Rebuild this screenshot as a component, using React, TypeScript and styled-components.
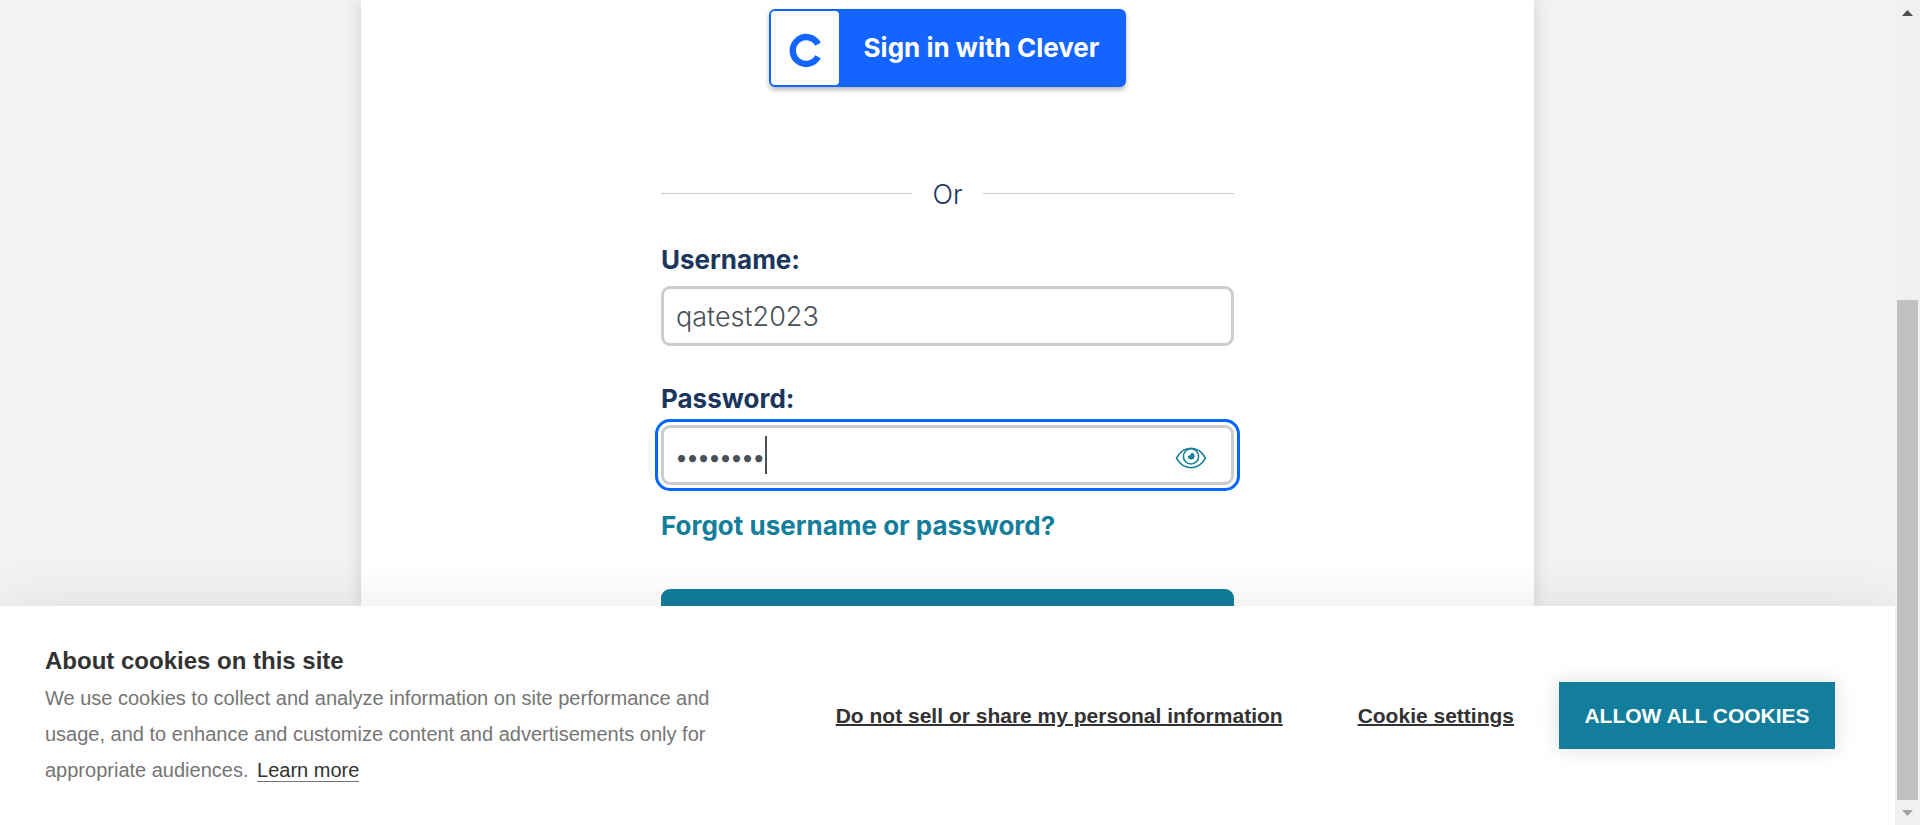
import React, { useState } from 'react';
import styled, { createGlobalStyle } from 'styled-components';

const brandFont = `Inter, 'Open Sans', sans-serif`;
const bannerFont = `'Liberation Sans', Arial, sans-serif`;
const teal = '#127e9b';
const navy = '#1b365d';

const GlobalStyle = createGlobalStyle`
  *, *::before, *::after { box-sizing: border-box; }
  body { margin: 0; background: #f2f2f2; font-family: ${brandFont}; }
`;

const Shell = styled.div`
  display: grid;
  grid-template-columns: minmax(0, 1fr) 25px;
  height: 100vh;
  overflow: hidden;
`;

const Viewport = styled.div`
  display: flex;
  flex-direction: column;
  min-height: 0;
  overflow: hidden;
`;

const Content = styled.main`
  flex: 1;
  min-height: 0;
  overflow: hidden;
  display: flex;
  justify-content: center;
`;

const Card = styled.section`
  display: flex;
  flex-direction: column;
  align-items: center;
  flex: 0 1 1173px;
  min-height: 100%;
  padding: 9px 24px 0;
  background: #fff;
  box-shadow: 0 0 16px rgba(0, 0, 0, 0.14);
`;

const CleverButton = styled.button`
  display: flex;
  flex: none;
  width: 357px;
  max-width: 100%;
  height: 78px;
  padding: 0;
  border: 2px solid #1464ff;
  border-radius: 6px;
  background: #1464ff;
  box-shadow: 0 3px 5px rgba(0, 0, 0, 0.28);
  color: #fff;
  font: 700 26px/36px ${brandFont};
  cursor: pointer;
`;

const CleverMark = styled.span`
  display: flex;
  align-items: center;
  justify-content: center;
  width: 68px;
  height: 74px;
  border-radius: 4px;
  background: #fff;
`;

const CleverText = styled.span`
  flex: 1;
  align-self: center;
  text-align: center;
`;

const Form = styled.form`
  display: flex;
  flex-direction: column;
  width: 573px;
  max-width: 100%;
  margin-top: 90px;
`;

const Divider = styled.div`
  display: flex;
  align-items: center;
  gap: 20px;
  margin-bottom: 29px;
  color: ${navy};
  font-size: 27px;
  font-weight: 300;
  line-height: 36px;

  &::before,
  &::after {
    content: '';
    flex: 1;
    height: 1px;
    margin-bottom: 4px;
    background: #ccc;
  }
`;

const Field = styled.div`
  display: flex;
  flex-direction: column;
  gap: 8px;
  margin-bottom: 35px;

  &:last-of-type { margin-bottom: 23px; }
`;

const Label = styled.label`
  color: ${navy};
  font-size: 26px;
  font-weight: 700;
  line-height: 36px;
`;

const InputFrame = styled.div<{ $focused?: boolean }>`
  position: relative;
  display: flex;
  align-items: center;
  height: 60px;
  padding: 0 24px 0 12px;
  border: 3px solid #ccc;
  border-radius: 9px;
  background: #fff;
  outline: ${(p) => (p.$focused ? '3px solid #0066ff' : 'none')};
  outline-offset: 3px;
`;

const TextInput = styled.input`
  flex: 1;
  min-width: 0;
  height: 100%;
  padding: 0;
  border: 0;
  outline: 0;
  background: transparent;
  color: #495057;
  font: 300 27px/36px ${brandFont};

  &[type='password'] {
    padding-top: 4px;
    font: 400 19px/36px Lato, sans-serif;
  }
`;

const Caret = styled.span`
  position: absolute;
  left: 101px;
  top: 8px;
  width: 2px;
  height: 38px;
  background: #495057;
`;

const EyeButton = styled.button`
  display: flex;
  padding: 0;
  border: 0;
  background: none;
  color: ${teal};
  cursor: pointer;
`;

const ForgotLink = styled.a`
  align-self: flex-start;
  color: ${teal};
  font-size: 26px;
  font-weight: 700;
  line-height: 36px;
  text-decoration: none;
`;

const SubmitButton = styled.button`
  height: 66px;
  margin-top: 45px;
  border: 0;
  border-radius: 9px;
  background: ${teal};
`;

const Banner = styled.aside`
  position: relative;
  display: flex;
  align-items: center;
  justify-content: space-between;
  gap: 24px;
  padding: 36px 60px 37px 45px;
  background: #fff;
  box-shadow: 0 0 50px rgba(0, 0, 0, 0.09);
  font-family: ${bannerFont};
`;

const Notice = styled.div`
  flex: 0 1 672px;
`;

const NoticeTitle = styled.h2`
  margin: 0;
  color: #323232;
  font-size: 24px;
  line-height: 38px;
`;

const NoticeText = styled.p`
  margin: 0;
  color: #757575;
  font-size: 20px;
  line-height: 36px;
`;

const LearnMore = styled.a`
  margin-left: 3px;
  border-bottom: 1px solid #757575;
  color: #323232;
  text-decoration: none;
`;

const Actions = styled.div`
  display: flex;
  align-items: center;
`;

const TextButton = styled.button<{ $gap: number }>`
  margin: 0 ${(p) => p.$gap}px 0 0;
  padding: 2px 0 0;
  border: 0;
  background: none;
  color: #323232;
  font: 700 21px/30px ${bannerFont};
  text-decoration: underline 2px;
  white-space: nowrap;
  cursor: pointer;
`;

const AllowButton = styled.button`
  width: 276px;
  height: 67px;
  padding: 2px 0 0;
  border: 0;
  background: ${teal};
  box-shadow: 0 0 20px rgba(0, 0, 0, 0.14);
  color: #fff;
  font: 700 21px/30px ${bannerFont};
  white-space: nowrap;
  cursor: pointer;
`;

const ScrollTrack = styled.div`
  display: grid;
  grid-template-rows: 25px 1fr 25px;
  justify-items: center;
  background: #f0f0f0;
`;

const ScrollArrow = styled.svg`
  align-self: center;
`;

const ScrollRail = styled.div`
  display: flex;
  flex-direction: column;
  justify-content: flex-end;
  width: 21px;
`;

const ScrollThumb = styled.div`
  height: 64.5%;
  background: #c1c1c1;
`;

export default function App() {
  const [username, setUsername] = useState('qatest2023');
  const [password, setPassword] = useState('password');
  const [visible, setVisible] = useState(false);

  return (
    <>
      <GlobalStyle />
      <Shell>
        <Viewport>
          <Content>
            <Card>
              <CleverButton type="button">
                <CleverMark>
                  <svg width="36" height="40" viewBox="0 0 36 40" fill="none" aria-hidden="true">
                    <path d="M31 16.2A13.4 13.4 0 1 0 31 28.8" stroke="#1464ff" strokeWidth="6.4" />
                  </svg>
                </CleverMark>
                <CleverText>Sign in with Clever</CleverText>
              </CleverButton>
              <Form onSubmit={(e) => e.preventDefault()}>
                <Divider>Or</Divider>
                <Field>
                  <Label htmlFor="username">Username:</Label>
                  <InputFrame>
                    <TextInput id="username" value={username} onChange={(e) => setUsername(e.target.value)} />
                  </InputFrame>
                </Field>
                <Field>
                  <Label htmlFor="password">Password:</Label>
                  <InputFrame $focused>
                    <TextInput
                      id="password"
                      type={visible ? 'text' : 'password'}
                      value={password}
                      onChange={(e) => setPassword(e.target.value)}
                    />
                    <Caret />
                    <EyeButton type="button" aria-label="Show password" onClick={() => setVisible(!visible)}>
                      <svg width="32" height="28" viewBox="0 -6 32 28" fill="none" stroke="currentColor" aria-hidden="true">
                        <path d="M1.4 11.2C5 4.8 10 1.3 16 1.3s11 3.5 14.6 9.9C27 17.4 22 20.7 16 20.7S5 17.4 1.4 11.2z" strokeWidth="1.6" strokeLinejoin="round" />
                        <circle cx="16" cy="9.4" r="7.6" strokeWidth="1.6" />
                        <path d="M16.3 5.8c-.2 1.8-1.2 2.9-3.5 3.2a3.4 3.4 0 1 0 3.5-3.2z" fill="currentColor" stroke="none" />
                      </svg>
                    </EyeButton>
                  </InputFrame>
                </Field>
                <ForgotLink href="#forgot">Forgot username or password?</ForgotLink>
                <SubmitButton type="submit" aria-label="Sign in" />
              </Form>
            </Card>
          </Content>
          <Banner aria-label="Cookies">
            <Notice>
              <NoticeTitle>About cookies on this site</NoticeTitle>
              <NoticeText>
                We use cookies to collect and analyze information on site performance and usage, and to enhance
                and customize content and advertisements only for appropriate audiences.{' '}
                <LearnMore href="#cookies">Learn more</LearnMore>
              </NoticeText>
            </Notice>
            <Actions>
              <TextButton type="button" $gap={75}>Do not sell or share my personal information</TextButton>
              <TextButton type="button" $gap={45}>Cookie settings</TextButton>
              <AllowButton type="button">ALLOW ALL COOKIES</AllowButton>
            </Actions>
          </Banner>
        </Viewport>
        <ScrollTrack aria-hidden="true">
          <ScrollArrow width="11" height="6" viewBox="0 0 11 6"><path d="M0 6 5.5 0 11 6z" fill="#505050" /></ScrollArrow>
          <ScrollRail><ScrollThumb /></ScrollRail>
          <ScrollArrow width="11" height="6" viewBox="0 0 11 6"><path d="M0 0 5.5 6 11 0z" fill="#a3a3a3" /></ScrollArrow>
        </ScrollTrack>
      </Shell>
    </>
  );
}
